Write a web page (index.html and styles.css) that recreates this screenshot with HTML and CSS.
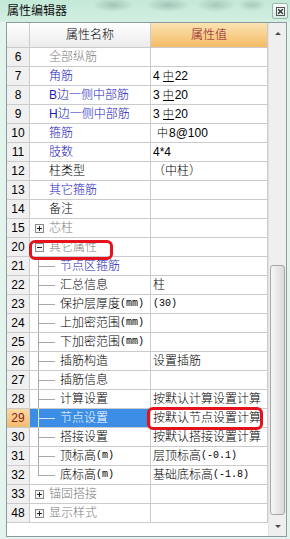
FILE: index.html
```html
<!DOCTYPE html>
<html lang="zh-CN">
  <head>
    <meta charset="UTF-8" />
    <title>属性编辑器</title>
    <link rel="stylesheet" href="styles.css">
  </head>
  <body>
    <div class="window">
      <div class="titlebar">
        <span class="title">属性编辑器</span>
        <span class="close">
          <svg width="9" height="9" viewBox="0 0 9 9">
            <rect x="0.5" y="0.5" width="8" height="8" fill="none" stroke="#555"/>
            <path d="M2.2 2.2l4.6 4.6M6.8 2.2l-4.6 4.6" stroke="#333" stroke-width="1.4"/>
          </svg>
        </span>
      </div>

      <div class="grid">
        <div class="sheet">
          <div class="row head">
            <div class="cell num"></div>
            <div class="cell name">属性名称</div>
            <div class="cell value">属性值</div>
          </div>

          <div class="row">
            <div class="cell num">6</div>
            <div class="cell name gray">全部纵筋</div>
            <div class="cell value"></div>
          </div>
          <div class="row">
            <div class="cell num">7</div>
            <div class="cell name blue">角筋</div>
            <div class="cell value">4<span class="bar3">中</span>22</div>
          </div>
          <div class="row">
            <div class="cell num">8</div>
            <div class="cell name blue">B边一侧中部筋</div>
            <div class="cell value">3<span class="bar3">中</span>20</div>
          </div>
          <div class="row">
            <div class="cell num">9</div>
            <div class="cell name blue">H边一侧中部筋</div>
            <div class="cell value">3<span class="bar3">中</span>20</div>
          </div>
          <div class="row">
            <div class="cell num">10</div>
            <div class="cell name blue">箍筋</div>
            <div class="cell value"><span class="bar1">中</span>8@100</div>
          </div>
          <div class="row">
            <div class="cell num">11</div>
            <div class="cell name blue">肢数</div>
            <div class="cell value">4*4</div>
          </div>
          <div class="row">
            <div class="cell num">12</div>
            <div class="cell name">柱类型</div>
            <div class="cell value">（中柱）</div>
          </div>
          <div class="row">
            <div class="cell num">13</div>
            <div class="cell name blue">其它箍筋</div>
            <div class="cell value"></div>
          </div>
          <div class="row">
            <div class="cell num">14</div>
            <div class="cell name">备注</div>
            <div class="cell value"></div>
          </div>
          <div class="row">
            <div class="cell num">15</div>
            <div class="cell name group gray">
              <svg class="box" width="9" height="9" viewBox="0 0 9 9"><rect x="0.5" y="0.5" width="8" height="8" fill="#f4f4f4" stroke="#8a8a8a"/><path d="M2 4.5h5M4.5 2v5" stroke="#222"/></svg>芯柱
            </div>
            <div class="cell value"></div>
          </div>
          <div class="row">
            <div class="cell num">20</div>
            <div class="cell name group gray">
              <svg class="box" width="9" height="9" viewBox="0 0 9 9"><rect x="0.5" y="0.5" width="8" height="8" fill="#f4f4f4" stroke="#8a8a8a"/><path d="M2 4.5h5" stroke="#222"/></svg>其它属性
              <span class="mark mark-group"></span>
            </div>
            <div class="cell value"></div>
          </div>
          <div class="row">
            <div class="cell num">21</div>
            <div class="cell name child blue"><span class="branch"></span>节点区箍筋</div>
            <div class="cell value"></div>
          </div>
          <div class="row">
            <div class="cell num">22</div>
            <div class="cell name child"><span class="branch"></span>汇总信息</div>
            <div class="cell value">柱</div>
          </div>
          <div class="row">
            <div class="cell num">23</div>
            <div class="cell name child"><span class="branch"></span>保护层厚度<span class="sm">(mm)</span></div>
            <div class="cell value"><span class="sm">(30)</span></div>
          </div>
          <div class="row">
            <div class="cell num">24</div>
            <div class="cell name child"><span class="branch"></span>上加密范围<span class="sm">(mm)</span></div>
            <div class="cell value"></div>
          </div>
          <div class="row">
            <div class="cell num">25</div>
            <div class="cell name child"><span class="branch"></span>下加密范围<span class="sm">(mm)</span></div>
            <div class="cell value"></div>
          </div>
          <div class="row">
            <div class="cell num">26</div>
            <div class="cell name child"><span class="branch"></span>插筋构造</div>
            <div class="cell value">设置插筋</div>
          </div>
          <div class="row">
            <div class="cell num">27</div>
            <div class="cell name child"><span class="branch"></span>插筋信息</div>
            <div class="cell value"></div>
          </div>
          <div class="row">
            <div class="cell num">28</div>
            <div class="cell name child"><span class="branch"></span>计算设置</div>
            <div class="cell value">按默认计算设置计算</div>
          </div>
          <div class="row sel">
            <div class="cell num">29</div>
            <div class="cell name child"><span class="branch"></span>节点设置</div>
            <div class="cell value">按默认节点设置计算<span class="mark mark-value"></span></div>
          </div>
          <div class="row">
            <div class="cell num">30</div>
            <div class="cell name child"><span class="branch"></span>搭接设置</div>
            <div class="cell value">按默认搭接设置计算</div>
          </div>
          <div class="row">
            <div class="cell num">31</div>
            <div class="cell name child"><span class="branch"></span>顶标高<span class="sm">(m)</span></div>
            <div class="cell value">层顶标高<span class="sm">(-0.1)</span></div>
          </div>
          <div class="row">
            <div class="cell num">32</div>
            <div class="cell name child"><span class="branch last"></span>底标高<span class="sm">(m)</span></div>
            <div class="cell value">基础底标高<span class="sm">(-1.8)</span></div>
          </div>
          <div class="row">
            <div class="cell num">33</div>
            <div class="cell name group gray">
              <svg class="box" width="9" height="9" viewBox="0 0 9 9"><rect x="0.5" y="0.5" width="8" height="8" fill="#f4f4f4" stroke="#8a8a8a"/><path d="M2 4.5h5M4.5 2v5" stroke="#222"/></svg>锚固搭接
            </div>
            <div class="cell value"></div>
          </div>
          <div class="row">
            <div class="cell num">48</div>
            <div class="cell name group gray">
              <svg class="box" width="9" height="9" viewBox="0 0 9 9"><rect x="0.5" y="0.5" width="8" height="8" fill="#f4f4f4" stroke="#8a8a8a"/><path d="M2 4.5h5M4.5 2v5" stroke="#222"/></svg>显示样式
            </div>
            <div class="cell value"></div>
          </div>
        </div>

        <div class="scrollbar">
          <div class="arrow up"></div>
          <div class="track"><div class="thumb"></div></div>
          <div class="arrow down"></div>
        </div>
      </div>
    </div>
  </body>
</html>
```

FILE: styles.css
```css
body {
  margin: 0;
  font-family: "Liberation Sans", "Noto Sans CJK SC", sans-serif;
  font-size: 12px;
  font-weight: 300;
  color: #000;
  background: #e2f4eb;
}
.window {
  width: 290px;
  height: 539px;
  display: flex;
  flex-direction: column;
}
.titlebar {
  height: 22px;
  display: flex;
  justify-content: space-between;
  align-items: flex-start;
  padding: 0 2px 0 7px;
  box-sizing: border-box;
  background:
    radial-gradient(ellipse 20px 7px at 113px 5px, rgba(95, 125, 112, 0.35), transparent),
    radial-gradient(ellipse 22px 7px at 168px 5px, rgba(95, 125, 112, 0.35), transparent),
    radial-gradient(ellipse 20px 7px at 216px 5px, rgba(95, 125, 112, 0.3), transparent),
    radial-gradient(ellipse 14px 6px at 252px 5px, rgba(95, 125, 112, 0.3), transparent),
    linear-gradient(#c3e9d8, #d3efe2);
}
.title {
  line-height: 22px;
  color: #111;
  font-weight: 400;
}
.close {
  width: 16px;
  height: 16px;
  margin-top: 3px;
  box-sizing: border-box;
  border: 1px solid #9cb6ad;
  border-radius: 2px;
  background: linear-gradient(#f6fcf9, #d4ebe1);
  display: flex;
  align-items: center;
  justify-content: center;
}
.grid {
  margin: 0 3px 2px 6px;
  height: 515px;
  box-sizing: border-box;
  border: 1px solid #8c9ba0;
  display: flex;
  background: #fff;
}
.sheet {
  width: 261px;
}
.row {
  display: grid;
  grid-template-columns: 23px 121px 117px;
  height: 19px;
}
.cell {
  position: relative;
  display: flex;
  align-items: center;
  box-sizing: border-box;
  border-right: 1px solid #cbcbcb;
  border-bottom: 1px solid #cbcbcb;
  line-height: 18px;
  white-space: nowrap;
}
.num {
  justify-content: center;
  background: #f0f0f0;
}
.name {
  padding-left: 19px;
}
.value {
  padding-left: 2px;
}
.row.head {
  height: 25px;
}
.head .cell {
  justify-content: center;
  padding: 0;
  background: linear-gradient(#ffffff, #ececec);
}
.head .value {
  color: #8a0f2c;
  background: linear-gradient(#fce3b3, #f3bb64);
}
.gray {
  color: #7c7c7c;
}
.blue {
  color: #1a1abc;
}
.group {
  padding-left: 5px;
}
.box {
  margin-right: 5px;
  flex: none;
}
.child {
  padding-left: 8px;
}
.branch {
  align-self: stretch;
  width: 17px;
  margin-right: 5px;
  flex: none;
  background:
    linear-gradient(#a8a8a8, #a8a8a8) 0 0 / 1px 100% no-repeat,
    linear-gradient(#a8a8a8, #a8a8a8) 0 50% / 100% 1px no-repeat;
}
.branch.last {
  background-size: 1px 50%, 100% 1px;
}
.sm {
  font-family: "Liberation Mono", monospace;
  font-size: 10px;
}
.bar3 {
  display: inline-block;
  font-size: 11px;
  line-height: 10px;
  margin: 0 1px 0 3px;
  border-bottom: 1px solid #000;
}
.bar1 {
  font-size: 11px;
  margin: 0 1px 0 4px;
}
.sel .num {
  color: #8a1a1a;
  background: linear-gradient(#fbd9a3, #f4bc6e);
}
.sel .name {
  color: #fff;
  background: #3b8de6;
}
.sel .branch {
  background:
    linear-gradient(#d6e8fb, #d6e8fb) 0 0 / 1px 100% no-repeat,
    linear-gradient(#d6e8fb, #d6e8fb) 0 50% / 100% 1px no-repeat;
}
.mark {
  position: absolute;
  z-index: 1;
  box-sizing: border-box;
  border: 3px solid #e3121c;
  border-radius: 6px;
}
.mark-group {
  left: -1px;
  top: 2px;
  width: 84px;
  height: 20px;
}
.mark-value {
  left: -4px;
  top: -2px;
  width: 116px;
  height: 23px;
}
.scrollbar {
  flex: 1;
  display: flex;
  flex-direction: column;
  background: #efefef;
  border-left: 1px solid #e2e2e2;
}
.arrow {
  height: 20px;
  display: flex;
  align-items: center;
  justify-content: center;
}
.arrow.down {
  height: 19px;
}
.arrow.up::before,
.arrow.down::before {
  content: "";
  border-left: 3px solid transparent;
  border-right: 3px solid transparent;
}
.arrow.up::before {
  border-bottom: 3px solid #4a4a4a;
}
.arrow.down::before {
  border-top: 3px solid #4a4a4a;
}
.track {
  flex: 1;
  display: flex;
  flex-direction: column;
  justify-content: flex-end;
  padding: 0 1px 2px 1px;
}
.thumb {
  height: 250px;
  box-sizing: border-box;
  border: 1px solid #a6a6a6;
  border-radius: 3px;
  background: linear-gradient(90deg, #f7f7f7, #dadada);
}
```
